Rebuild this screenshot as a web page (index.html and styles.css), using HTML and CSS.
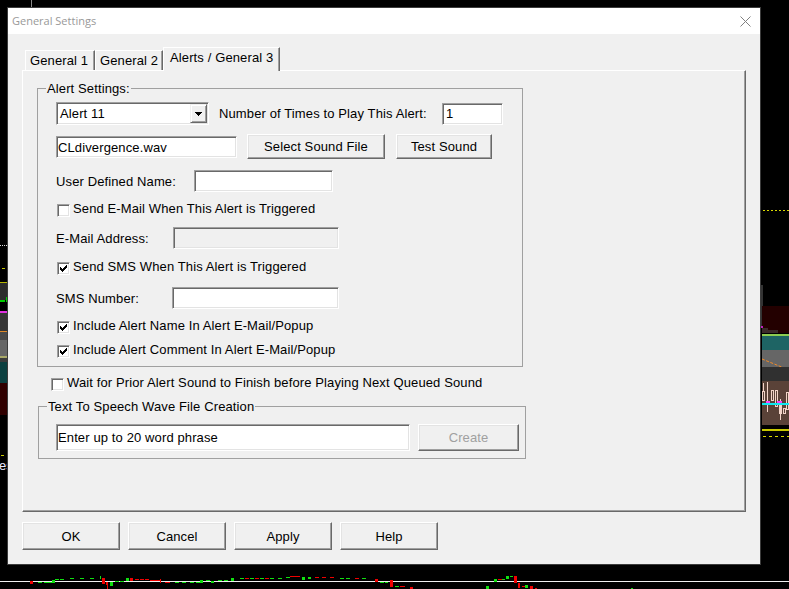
FILE: index.html
```html
<!DOCTYPE html>
<html lang="en">
<head>
<meta charset="utf-8">
<title>General Settings</title>
<link rel="stylesheet" href="styles.css">
</head>
<body>

<!-- chart window behind the dialog -->
<svg class="chart" width="789" height="589" viewBox="0 0 789 589" shape-rendering="crispEdges">
  <rect x="31" y="0" width="1" height="7" fill="#8a8a8a"/>

  <!-- left edge of the price pane -->
  <rect x="0" y="245" width="1" height="1" fill="#ddd"/>
  <rect x="2" y="245" width="1" height="1" fill="#ddd"/>
  <rect x="4" y="245" width="1" height="1" fill="#ddd"/>
  <rect x="6" y="245" width="1" height="1" fill="#ddd"/>
  <rect x="2" y="268" width="3" height="1" fill="#c8c800"/>
  <rect x="0" y="282" width="7" height="1" fill="#b4b400"/>
  <rect x="0" y="283" width="7" height="17" fill="#2c2c2c"/>
  <rect x="0" y="300" width="5" height="2" fill="#00d000"/>
  <rect x="6" y="297" width="1" height="5" fill="#00d000"/>
  <rect x="0" y="311" width="7" height="2" fill="#e030e0"/>
  <rect x="0" y="313" width="7" height="18" fill="#353535"/>
  <rect x="0" y="331" width="7" height="1" fill="#e08828"/>
  <rect x="0" y="332" width="7" height="8" fill="#4a4a4a"/>
  <rect x="0" y="340" width="7" height="16" fill="#666"/>
  <rect x="0" y="356" width="7" height="2" fill="#a8a868"/>
  <rect x="0" y="358" width="7" height="4" fill="#3c3c3c"/>
  <rect x="0" y="362" width="7" height="21" fill="#0b4040"/>
  <rect x="0" y="383" width="7" height="32" fill="#300000"/>
  <rect x="1" y="455" width="3" height="1" fill="#c8c800"/>
  <text x="-1" y="470" class="chart-text">es</text>

  <!-- right edge of the price pane -->
  <line x1="763" y1="210.5" x2="789" y2="210.5" stroke="#d8d800" stroke-dasharray="2 2"/>
  <rect x="761" y="285" width="2" height="42" fill="#333"/>
  <rect x="762" y="306" width="27" height="27" fill="#230000"/>
  <rect x="761" y="326" width="2" height="2" fill="#c020c0"/>
  <rect x="762" y="328" width="6" height="5" fill="#3b2a2a"/>
  <rect x="768" y="330" width="10" height="3" fill="#3b2a2a"/>
  <rect x="762" y="334" width="27" height="2" fill="#8ccc50"/>
  <rect x="762" y="336" width="27" height="14" fill="#1e6464"/>
  <rect x="762" y="350" width="27" height="17" fill="#666"/>
  <line x1="762" y1="359" x2="789" y2="370" stroke="#f08a28" stroke-dasharray="3 1.5" shape-rendering="auto"/>
  <rect x="762" y="367" width="27" height="14" fill="#303030"/>
  <rect x="762" y="381" width="27" height="44" fill="#5a4238"/>
  <g fill="none" stroke="#f2d4c8">
    <rect x="762.5" y="391.5" width="2" height="9"/>
    <line x1="763.5" y1="383" x2="763.5" y2="391"/>
    <line x1="767.5" y1="382" x2="767.5" y2="412"/>
    <rect x="771.5" y="390.5" width="2" height="10"/>
    <rect x="775.5" y="390.5" width="2" height="16"/>
    <rect x="779.5" y="405.5" width="2" height="8"/>
    <line x1="780.5" y1="399" x2="780.5" y2="420"/>
    <rect x="783.5" y="408.5" width="2" height="5"/>
    <rect x="786.5" y="392.5" width="2" height="17"/>
  </g>
  <rect x="762" y="403" width="27" height="2" fill="#10e8f0"/>
  <rect x="766" y="401" width="4" height="2" fill="#ff40ff"/>
  <rect x="777" y="401" width="5" height="2" fill="#ff40ff"/>
  <rect x="762" y="429" width="27" height="2" fill="#c8c800"/>
  <line x1="763" y1="436.5" x2="789" y2="436.5" stroke="#d8d800" stroke-dasharray="3 3"/>

  <!-- lower pane: baseline with bars -->
  <rect x="0" y="581" width="789" height="1" fill="#f0f0f0"/>
  <g fill="#f00000">
    <rect x="30" y="581" width="3" height="3"/>
    <rect x="102" y="578" width="3" height="6"/>
    <rect x="106" y="582" width="2" height="3"/>
    <rect x="107" y="585" width="1" height="4"/>
    <rect x="130" y="578" width="3" height="3"/>
    <rect x="135" y="579" width="4" height="1"/>
    <rect x="140" y="579" width="4" height="1"/>
    <rect x="145" y="579" width="4" height="1"/>
    <rect x="150" y="580" width="10" height="1"/>
    <rect x="160" y="579" width="1" height="4"/>
    <rect x="165" y="582" width="5" height="1"/>
    <rect x="245" y="578" width="4" height="1"/>
    <rect x="255" y="578" width="4" height="1"/>
    <rect x="265" y="578" width="4" height="1"/>
    <rect x="290" y="576" width="10" height="1"/>
    <rect x="315" y="577" width="4" height="1"/>
    <rect x="322" y="577" width="4" height="1"/>
    <rect x="330" y="577" width="4" height="1"/>
    <rect x="355" y="578" width="4" height="1"/>
    <rect x="375" y="579" width="3" height="3"/>
    <rect x="390" y="580" width="3" height="7"/>
    <rect x="400" y="586" width="5" height="1"/>
    <rect x="410" y="587" width="3" height="2"/>
    <rect x="498" y="579" width="4" height="1"/>
    <rect x="514" y="576" width="3" height="7"/>
    <rect x="518" y="583" width="2" height="5"/>
    <rect x="522" y="586" width="3" height="1"/>
    <rect x="530" y="586" width="3" height="3"/>
    <rect x="535" y="588" width="2" height="1"/>
  </g>
  <g fill="#10e010">
    <rect x="38" y="582" width="4" height="1"/>
    <rect x="44" y="582" width="4" height="1"/>
    <rect x="48" y="582" width="4" height="1"/>
    <rect x="52" y="580" width="3" height="3"/>
    <rect x="55" y="579" width="4" height="1"/>
    <rect x="60" y="579" width="4" height="1"/>
    <rect x="70" y="578" width="4" height="1"/>
    <rect x="80" y="578" width="4" height="1"/>
    <rect x="90" y="578" width="4" height="1"/>
    <rect x="100" y="576" width="1" height="3"/>
    <rect x="110" y="582" width="3" height="4"/>
    <rect x="115" y="581" width="4" height="1"/>
    <rect x="120" y="581" width="4" height="1"/>
    <rect x="126" y="578" width="3" height="3"/>
    <rect x="175" y="582" width="4" height="1"/>
    <rect x="182" y="582" width="4" height="1"/>
    <rect x="190" y="582" width="4" height="1"/>
    <rect x="196" y="582" width="4" height="1"/>
    <rect x="200" y="580" width="3" height="3"/>
    <rect x="206" y="580" width="4" height="1"/>
    <rect x="211" y="581" width="3" height="2"/>
    <rect x="218" y="580" width="4" height="1"/>
    <rect x="224" y="580" width="4" height="1"/>
    <rect x="231" y="578" width="3" height="3"/>
    <rect x="240" y="578" width="4" height="1"/>
    <rect x="250" y="578" width="4" height="1"/>
    <rect x="260" y="578" width="4" height="1"/>
    <rect x="270" y="578" width="4" height="1"/>
    <rect x="278" y="578" width="4" height="1"/>
    <rect x="286" y="577" width="4" height="1"/>
    <rect x="302" y="577" width="3" height="3"/>
    <rect x="308" y="577" width="3" height="2"/>
    <rect x="340" y="578" width="4" height="1"/>
    <rect x="346" y="578" width="4" height="1"/>
    <rect x="362" y="578" width="4" height="1"/>
    <rect x="380" y="582" width="4" height="1"/>
    <rect x="385" y="582" width="3" height="1"/>
    <rect x="395" y="586" width="4" height="1"/>
    <rect x="486" y="586" width="3" height="3"/>
    <rect x="494" y="579" width="3" height="3"/>
    <rect x="502" y="579" width="3" height="1"/>
    <rect x="506" y="576" width="3" height="3"/>
    <rect x="510" y="576" width="3" height="1"/>
    <rect x="525" y="585" width="3" height="3"/>
    <rect x="631" y="588" width="2" height="1"/>
  </g>
</svg>

<div class="dialog">
  <div class="titlebar">
    <span class="title">General Settings</span>
    <svg class="close" width="11" height="11" viewBox="0 0 11 11">
      <path d="M0.5 0.5 L10.5 10.5 M10.5 0.5 L0.5 10.5" stroke="#808080" stroke-width="1"/>
    </svg>
  </div>

  <div class="dialog-body">
    <div class="tabs">
      <div class="tab tab-1">General 1</div>
      <div class="tab tab-2">General 2</div>
      <div class="tab tab-3 active">Alerts / General 3</div>
    </div>

    <div class="tab-panel">
      <fieldset class="group group-alert">
        <legend>Alert Settings:</legend>
        <div class="group-inner">
          <div class="row row-alert">
            <div class="field select">
              <span>Alert 11</span>
              <span class="select-btn">
                <svg width="7" height="4" viewBox="0 0 7 4" shape-rendering="crispEdges"><path d="M0 0 H7 V1 H6 V2 H5 V3 H4 V4 H3 V3 H2 V2 H1 V1 H0 Z" fill="#000"/></svg>
              </span>
            </div>
            <span class="lbl lbl-times">Number of Times to Play This Alert:</span>
            <div class="field field-times">1</div>
          </div>

          <div class="row row-file">
            <div class="field field-file">CLdivergence.wav</div>
            <div class="btn btn-select">Select Sound File</div>
            <div class="btn btn-test">Test Sound</div>
          </div>

          <div class="row row-name">
            <span class="lbl lbl-name">User Defined Name:</span>
            <div class="field field-name"></div>
          </div>

          <div class="check-row row-email-check">
            <span class="check"></span>
            <span class="check-text">Send E-Mail When This Alert is Triggered</span>
          </div>

          <div class="row row-email">
            <span class="lbl lbl-email">E-Mail Address:</span>
            <div class="field field-email disabled"></div>
          </div>

          <div class="check-row row-sms-check">
            <span class="check"><svg width="7" height="7" viewBox="0 0 7 7" shape-rendering="crispEdges"><path d="M0 2 H1 V3 H2 V4 H3 V3 H4 V2 H5 V1 H6 V0 H7 V3 H6 V4 H5 V5 H4 V6 H3 V7 H2 V6 H1 V5 H0 Z" fill="#000"/></svg></span>
            <span class="check-text">Send SMS When This Alert is Triggered</span>
          </div>

          <div class="row row-sms">
            <span class="lbl lbl-sms">SMS Number:</span>
            <div class="field field-sms"></div>
          </div>

          <div class="check-row row-inc-name">
            <span class="check"><svg width="7" height="7" viewBox="0 0 7 7" shape-rendering="crispEdges"><path d="M0 2 H1 V3 H2 V4 H3 V3 H4 V2 H5 V1 H6 V0 H7 V3 H6 V4 H5 V5 H4 V6 H3 V7 H2 V6 H1 V5 H0 Z" fill="#000"/></svg></span>
            <span class="check-text">Include Alert Name In Alert E-Mail/Popup</span>
          </div>

          <div class="check-row row-inc-comment">
            <span class="check"><svg width="7" height="7" viewBox="0 0 7 7" shape-rendering="crispEdges"><path d="M0 2 H1 V3 H2 V4 H3 V3 H4 V2 H5 V1 H6 V0 H7 V3 H6 V4 H5 V5 H4 V6 H3 V7 H2 V6 H1 V5 H0 Z" fill="#000"/></svg></span>
            <span class="check-text">Include Alert Comment In Alert E-Mail/Popup</span>
          </div>
        </div>
      </fieldset>

      <div class="check-row row-wait">
        <span class="check"></span>
        <span class="check-text">Wait for Prior Alert Sound to Finish before Playing Next Queued Sound</span>
      </div>

      <fieldset class="group group-tts">
        <legend>Text To Speech Wave File Creation</legend>
        <div class="group-inner">
          <div class="field field-phrase">Enter up to 20 word phrase</div>
          <div class="btn btn-create disabled">Create</div>
        </div>
      </fieldset>
    </div>

    <div class="buttons">
      <div class="btn">OK</div>
      <div class="btn">Cancel</div>
      <div class="btn">Apply</div>
      <div class="btn">Help</div>
    </div>
  </div>
</div>

</body>
</html>
```

FILE: styles.css
```css
* {
  box-sizing: border-box;
}

html,
body {
  margin: 0;
  padding: 0;
}

body {
  position: relative;
  width: 789px;
  height: 589px;
  overflow: hidden;
  background: #000;
  font: 13px/15px "Liberation Sans", Arial, sans-serif;
  letter-spacing: 0.12px;
  color: #000;
}

/* chart canvas behind the dialog */
.chart {
  position: absolute;
  left: 0;
  top: 0;
  display: block;
}

.chart-text {
  font: 13px "Liberation Sans", Arial, sans-serif;
  fill: #e8e8ff;
}

/* dialog window */
.dialog {
  position: absolute;
  left: 7px;
  top: 7px;
  width: 754px;
  height: 558px;
  border: 1px solid #3c3c3c;
  background: #f0f0f0;
  display: flex;
  flex-direction: column;
}

.titlebar {
  flex: none;
  height: 26px;
  background: #fff;
  display: flex;
  align-items: center;
  justify-content: space-between;
  padding: 0 9px 0 4px;
}

.title {
  font: 11px/14px "Open Sans", "Noto Sans", sans-serif;
  letter-spacing: 0;
  color: #999;
}

.close {
  display: block;
}

.dialog-body {
  flex: 1;
  padding: 13px 0 0 14px;
}

/* tab strip */
.tabs {
  position: relative;
  z-index: 1;
  display: flex;
  align-items: flex-end;
  height: 23px;
  padding-left: 3px;
}

.tab {
  height: 20px;
  background: #f0f0f0;
  border-top: 1px solid #fff;
  border-left: 1px solid #fff;
  border-right: 1px solid #696969;
  box-shadow: inset -1px 0 #a0a0a0;
  padding: 2px 0 0 4px;
  white-space: nowrap;
}

.tab-1 {
  width: 70px;
}

.tab-2 {
  width: 68px;
}

.tab-3 {
  width: 117px;
}

.tab.active {
  height: 24px;
  margin-bottom: -1px;
  padding-left: 6px;
}

.tab-panel {
  width: 724px;
  height: 442px;
  border: 1px solid;
  border-color: #fff #696969 #696969 #fff;
  box-shadow: inset -1px -1px #a0a0a0;
  padding: 10px 0 0 14px;
}

/* group boxes */
.group {
  margin: 0;
  padding: 0 0 8px 8px;
  border: 1px solid #a0a0a0;
  min-width: 0;
}

.group legend {
  padding: 0 1px;
  line-height: 15px;
}

.group-alert {
  width: 486px;
}

.group-alert .group-inner {
  padding: 6px 0 0 10px;
}

.group-tts {
  width: 488px;
  margin: 8px 0 0 1px;
  padding-bottom: 7px;
}

.group-tts .group-inner {
  display: flex;
  align-items: center;
  padding: 10px 0 0 9px;
}

/* rows */
.row {
  display: flex;
  align-items: center;
}

.row-alert {
  height: 23px;
}

.row-file {
  margin-top: 9px;
  height: 25px;
  align-items: flex-end;
}

.row-name {
  margin-top: 11px;
}

.row-email-check {
  margin-top: 12px;
}

.row-email {
  margin-top: 10px;
}

.row-sms-check {
  margin-top: 13px;
}

.row-sms {
  margin-top: 12px;
}

.row-inc-name {
  margin-top: 12px;
}

.row-inc-comment {
  margin-top: 11px;
}

.row-wait {
  margin: 11px 0 0 14px;
}

.lbl {
  flex: none;
  white-space: nowrap;
}

.lbl-times {
  width: 223px;
  margin-left: 10px;
}

.lbl-name {
  width: 138px;
}

.lbl-email {
  width: 117px;
}

.lbl-sms {
  width: 116px;
}

/* sunken edit fields */
.field {
  flex: none;
  height: 22px;
  background: #fff;
  border: 1px solid;
  border-color: #a0a0a0 #fff #fff #a0a0a0;
  box-shadow: inset 1px 1px #696969, inset -1px -1px #e3e3e3;
  padding: 0 2px 0 1px;
  display: flex;
  align-items: center;
  white-space: nowrap;
  overflow: hidden;
}

.field.disabled {
  background: #f0f0f0;
}

.select {
  width: 153px;
  height: 23px;
  padding: 0 1px 0 3px;
  justify-content: space-between;
}

.select-btn {
  width: 17px;
  height: 19px;
  background: #f0f0f0;
  border: 1px solid;
  border-color: #f0f0f0 #696969 #696969 #f0f0f0;
  box-shadow: inset 1px 1px #fff, inset -1px -1px #a0a0a0;
  display: flex;
  align-items: center;
  justify-content: center;
}

.select-btn svg {
  display: block;
}

.field-times {
  width: 61px;
  padding-left: 3px;
}

.field-file {
  width: 181px;
  margin-bottom: 1px;
}

.field-name {
  width: 139px;
}

.field-email {
  width: 166px;
}

.field-sms {
  width: 167px;
}

.field-phrase {
  width: 354px;
  height: 27px;
}

/* raised push buttons */
.btn {
  flex: none;
  background: #f0f0f0;
  border: 1px solid;
  border-color: #fff #696969 #696969 #fff;
  box-shadow: inset -1px -1px #a0a0a0, inset 1px 1px #e3e3e3;
  display: flex;
  align-items: center;
  justify-content: center;
  white-space: nowrap;
}

.btn-select {
  width: 138px;
  height: 25px;
  margin-left: 10px;
}

.btn-test {
  width: 96px;
  height: 25px;
  margin-left: 11px;
}

.btn-create {
  width: 101px;
  height: 27px;
  margin-left: 8px;
}

.btn.disabled {
  color: #a0a0a0;
}

/* check boxes */
.check-row {
  display: flex;
  align-items: flex-start;
  height: 13px;
  gap: 3px;
}

.check {
  flex: none;
  width: 13px;
  height: 13px;
  margin-left: 1px;
  background: #fff;
  border: 1px solid;
  border-color: #a0a0a0 #fff #fff #a0a0a0;
  box-shadow: inset 1px 1px #696969, inset -1px -1px #e3e3e3;
}

.row-wait .check {
  margin-left: 0;
}

.check svg {
  display: block;
  margin: 2px 0 0 2px;
}

.check-text {
  margin-top: -3px;
  white-space: nowrap;
}

/* dialog buttons */
.buttons {
  display: flex;
  gap: 8px;
  margin-top: 10px;
}

.buttons .btn {
  width: 98px;
  height: 28px;
}
```
